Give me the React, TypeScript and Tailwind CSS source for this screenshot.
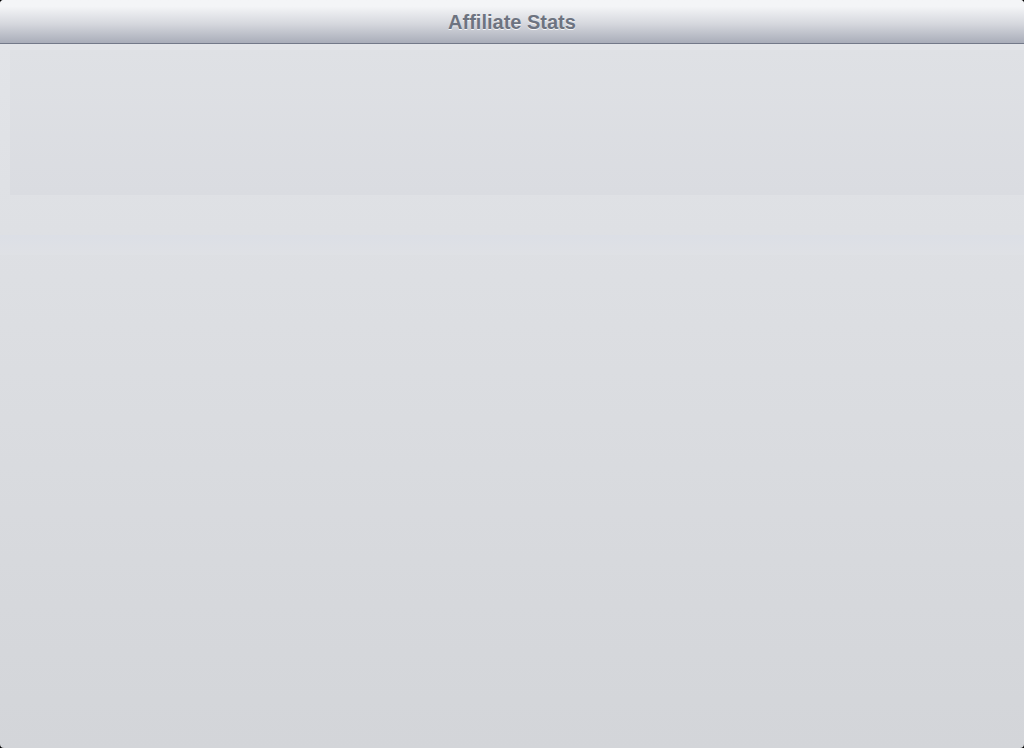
export default function App() {
  return (
    <div className="h-[748px] w-[1024px] bg-black">
      <div className="flex h-full w-full flex-col overflow-hidden rounded-[4px] bg-gradient-to-b from-[#e3e5e9] to-[#d3d5d9]">
        <header className="flex h-[44px] shrink-0 items-center justify-center border-b border-[#737989] bg-gradient-to-b from-[#f4f5f7] from-15% via-[#d6d8de] via-55% to-[#a9adb9]">
          <h1 className="text-[20px] font-bold text-[#6d7380] [font-family:'Liberation_Sans',Arial,sans-serif] [text-shadow:0_1px_0_rgba(255,255,255,0.8)]">
            Affiliate Stats
          </h1>
        </header>
        <main className="flex flex-1 flex-col">
          <section className="ml-[10px] mt-[6px] h-[145px] bg-gradient-to-b from-[#dfe1e5] to-[#dadce1]" />
          <div className="mt-[40px] h-[20px] bg-gradient-to-b from-[#dcdfe6] to-[#dfe1e5]" />
        </main>
      </div>
    </div>
  )
}
